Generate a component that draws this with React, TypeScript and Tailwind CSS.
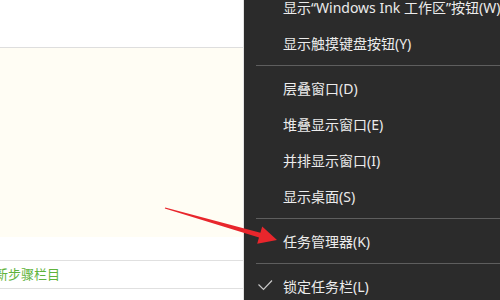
import React from "react";

const Item = ({ label, check = false }: { label: string; check?: boolean }) => (
  <div className="relative flex h-[36px] items-center pl-[39px] text-[14px] text-[#ececec] whitespace-nowrap">
    {check && (
      <svg className="absolute left-[13px] top-[10px]" width="16" height="14" viewBox="0 0 16 14">
        <path d="M1.5 6.5 L6.5 11.5 L15 2.5" fill="none" stroke="#c8c8c8" strokeWidth="1.2" />
      </svg>
    )}
    {label}
  </div>
);

const Sep = () => (
  <div className="py-[4px] pl-[12px]">
    <div className="h-px bg-[#5e5e5e]" />
  </div>
);

export default function App() {
  return (
    <div
      className="relative flex h-[300px] w-[500px] overflow-hidden bg-white"
      style={{ fontFamily: '"Noto Sans", "Noto Sans CJK SC", sans-serif' }}
    >
      <div className="flex w-[244px] shrink-0 flex-col border-r border-[#e2e2e2]">
        <div className="h-[47px] bg-white" />
        <div className="h-px bg-[#dedede]" />
        <div className="h-[189px] bg-[#fffdf4]" />
        <div className="h-[23px] bg-white" />
        <div className="h-px bg-[#e0e0e0]" />
        <div className="flex h-[27px] items-center bg-white pl-0">
          <span className="ml-[-5px] text-[13px] text-[#5fb33c]">新步骤栏目</span>
        </div>
        <div className="h-px bg-[#e0e0e0]" />
        <div className="flex-1 bg-white" />
      </div>
      <div className="flex flex-1 flex-col bg-[#2b2b2b] mt-0">
        <div className="mt-[-11px]">
          <Item label="显示“Windows Ink 工作区”按钮(W)" />
          <Item label="显示触摸键盘按钮(Y)" />
          <Sep />
          <Item label="层叠窗口(D)" />
          <Item label="堆叠显示窗口(E)" />
          <Item label="并排显示窗口(I)" />
          <Item label="显示桌面(S)" />
          <Sep />
          <Item label="任务管理器(K)" />
          <Sep />
          <Item label="锁定任务栏(L)" check />
        </div>
      </div>
      <svg className="pointer-events-none absolute left-0 top-0" width="500" height="300">
        <polygon
          points="165.2,207.4 260.4,232.7 262.2,226.5 277,240 257.2,243.7 259.0,237.5 164.8,208.6"
          fill="#e8262c"
        />
      </svg>
    </div>
  );
}
